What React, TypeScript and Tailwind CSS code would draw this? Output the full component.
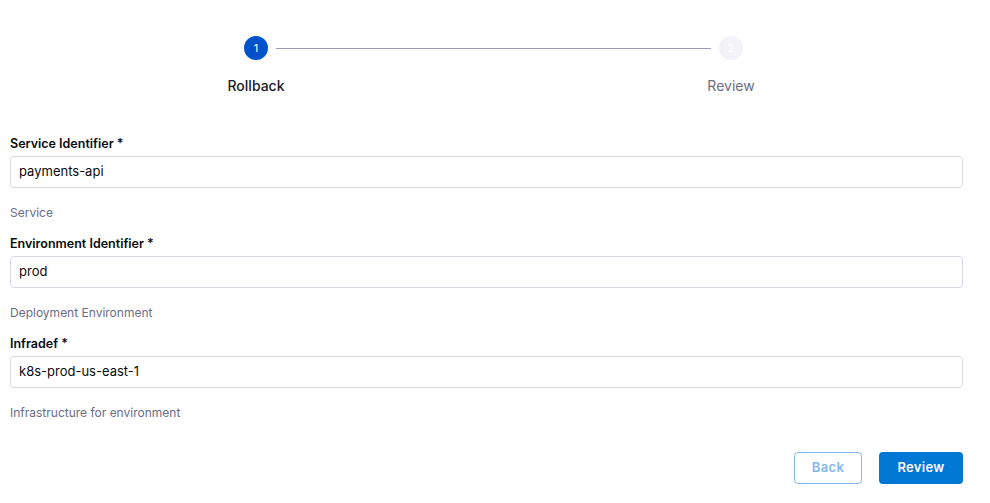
import React from "react";

type Field = {
  label: string;
  value: string;
  hint: string;
};

const fields: Field[] = [
  { label: "Service Identifier *", value: "payments-api", hint: "Service" },
  { label: "Environment Identifier *", value: "prod", hint: "Deployment Environment" },
  { label: "Infradef *", value: "k8s-prod-us-east-1", hint: "Infrastructure for environment" },
];

function Stepper() {
  return (
    <div className="pt-9 pl-[244px] w-[499px] box-content">
      <div className="flex items-center">
        <div className="w-6 h-6 rounded-full bg-[#0052cc] text-white text-[11px] flex items-center justify-center">
          1
        </div>
        <div className="flex-1 mx-2 h-px bg-[#9d9ab3]" />
        <div className="w-6 h-6 rounded-full bg-[#f3f3f8] text-white text-[11px] flex items-center justify-center">
          2
        </div>
      </div>
      <div className="flex justify-between mt-[15px]">
        <div className="w-6 flex justify-center whitespace-nowrap text-[14px] font-medium text-[#1b1b26]">
          Rollback
        </div>
        <div className="w-6 flex justify-center whitespace-nowrap text-[14px] text-[#6b6d85]">
          Review
        </div>
      </div>
    </div>
  );
}

export default function App() {
  return (
    <div
      className="w-[990px] h-[503px] bg-white overflow-hidden"
      style={{ fontFamily: "Inter, 'Noto Sans', sans-serif" }}
    >
      <Stepper />
      <div className="px-[10px] w-[973px] mt-[40px]">
        {fields.map((f) => (
          <div key={f.label} className="h-[100px]">
            <div className="text-[12.5px] font-semibold text-[#0b0b0d] leading-4">
              {f.label}
            </div>
            <div className="mt-[4px] h-8 rounded border border-[#d9dae5] flex items-center px-[8px] text-[13px] text-[#0b0b0d]">
              {f.value}
            </div>
            <div className="mt-[17px] text-[12px] text-[#6b6d85] leading-4">{f.hint}</div>
          </div>
        ))}
      </div>
      <div className="flex justify-end gap-[17px] pr-[27px] mt-[16px]">
        <button className="h-8 w-[68px] rounded border border-[#7fb8ef] text-[#7fb8ef] text-[13px] font-semibold tracking-wide">
          Back
        </button>
        <button className="h-8 w-[84px] rounded bg-[#0278d5] text-white text-[13px] font-semibold tracking-wide">
          Review
        </button>
      </div>
    </div>
  );
}
